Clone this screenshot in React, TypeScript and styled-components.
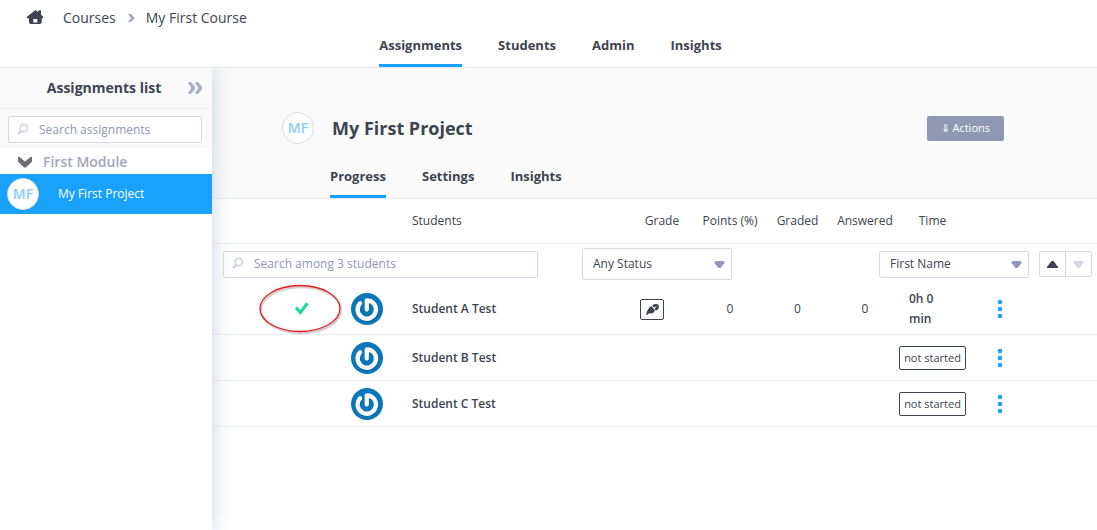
import React from "react";
import styled, { createGlobalStyle, css } from "styled-components";

const GlobalStyle = createGlobalStyle`
  *, *::before, *::after { box-sizing: border-box; }
  body {
    margin: 0;
    background: #fff;
    color: #3d444f;
    font-family: "Open Sans", "Noto Sans", sans-serif;
    font-size: 12px;
    line-height: 20px;
  }
  button, input, select { font: inherit; color: inherit; margin: 0; }
  a { color: inherit; text-decoration: none; }
  h1, h2, h3, ul, ol { margin: 0; padding: 0; }
  ul, ol { list-style: none; }
  svg { display: block; flex: none; }
`;

const Page = styled.div`
  min-height: 100vh;
  display: flex;
  flex-direction: column;
`;

const TopBar = styled.header`
  position: relative;
  z-index: 2;
  background: #fff;
  border-bottom: 1px solid #e8e9ee;
`;

const Breadcrumbs = styled.ol`
  display: flex;
  align-items: center;
  height: 35px;
  padding-left: 27px;
  font-size: 14px;
`;

const Crumb = styled.li`
  display: flex;
  align-items: center;
  &:nth-child(2) { margin-left: 20px; }
`;

const Separator = styled.svg`
  margin: 0 11px 0 12px;
`;

const Tabs = styled.ul<{ $centered?: boolean }>`
  display: flex;
  gap: 36px;
  font-size: 13px;
  font-weight: 700;
  ${(p) =>
    p.$centered
      ? css`justify-content: center; padding-left: 4px;`
      : css`padding-left: 118px;`}
`;

const Tab = styled.a<{ $active?: boolean }>`
  display: block;
  height: 32px;
  line-height: 20px;
  border-bottom: 3px solid ${(p) => (p.$active ? "#18a2fb" : "transparent")};
`;

const Body = styled.div`
  flex: 1;
  display: flex;
`;

const Sidebar = styled.aside`
  position: relative;
  z-index: 1;
  flex: none;
  width: 212px;
  background: #fff;
  box-shadow: 0 0 20px #c8cee2;
`;

const SidebarHead = styled.div`
  display: flex;
  align-items: center;
  justify-content: flex-end;
  height: 41px;
  padding-right: 10px;
  background: #fafafa;
  border-bottom: 1px solid #ededf3;
`;

const SidebarTitle = styled.h2`
  flex: 1;
  text-align: center;
  padding-left: 20px;
  font-size: 14px;
  font-weight: 700;
`;

const IconButton = styled.button`
  display: flex;
  align-items: center;
  justify-content: center;
  padding: 0;
  border: 0;
  background: none;
  cursor: pointer;
`;

const SidebarSearch = styled.div`
  padding: 7px 10px 5px 8px;
  background: #fafafa;
`;

const SearchField = styled.label`
  display: flex;
  align-items: center;
  gap: 10px;
  flex: 1;
  height: 27px;
  padding: 0 8px;
  background: #fff;
  border: 1px solid #d5d8e6;
  border-radius: 2px;
`;

const SearchInput = styled.input`
  flex: 1;
  min-width: 0;
  padding: 0;
  border: 0;
  outline: 0;
  background: none;
  font-size: 12px;
  &::placeholder { color: #8e98b3; opacity: 1; }
`;

const ModuleHead = styled.button`
  display: flex;
  align-items: center;
  gap: 11px;
  width: 100%;
  height: 26px;
  padding: 2px 0 0 18px;
  border: 0;
  background: #fff;
  color: #a1a6c0;
  font-size: 14px;
  font-weight: 600;
  cursor: pointer;
`;

const AssignmentLink = styled.a`
  display: flex;
  align-items: center;
  gap: 19px;
  height: 40px;
  padding-left: 7px;
  background: #18a2fb;
  color: #fff;
`;

const Initials = styled.span`
  display: flex;
  align-items: center;
  justify-content: center;
  flex: none;
  width: 32px;
  height: 32px;
  border: 1px solid #d9dcea;
  border-radius: 50%;
  background: #fff;
  color: #8accfd;
  font-size: 14px;
  font-weight: 600;
`;

const Main = styled.main`
  flex: 1;
  min-width: 0;
`;

const ProjectHead = styled.section`
  padding-top: 44px;
  background: #fafafa;
  border-bottom: 1px solid #e8e9f2;
`;

const ProjectTitleRow = styled.div`
  display: flex;
  align-items: center;
  gap: 18px;
  padding: 0 93px 0 70px;
  margin-bottom: 22px;
`;

const ProjectTitle = styled.h1`
  flex: 1;
  font-size: 18px;
  line-height: 24px;
  font-weight: 700;
`;

const ActionsButton = styled.button`
  height: 25px;
  padding: 0 14px;
  border: 0;
  border-radius: 2px;
  background: #8e98b3;
  color: #fff;
  font-size: 11px;
  cursor: pointer;
`;

const StudentTable = styled.table`
  width: 100%;
  table-layout: fixed;
  border-collapse: separate;
  border-spacing: 0;
`;

const Column = styled.col<{ $width?: number }>`
  ${(p) => p.$width && css`width: ${p.$width}px;`}
`;

const Row = styled.tr<{ $height: number; $plain?: boolean }>`
  height: ${(p) => p.$height}px;
  > * {
    padding: 0;
    border-bottom: ${(p) => (p.$plain ? "0" : "1px solid #ebecf4")};
  }
`;

const HeadCell = styled.th<{ $name?: boolean }>`
  font-weight: 400;
  white-space: nowrap;
  text-align: ${(p) => (p.$name ? "left" : "center")};
  && { padding-left: ${(p) => (p.$name ? 20 : 0)}px; }
`;

const Cell = styled.td`
  text-align: center;
`;

const StatusCell = styled(Cell)`
  && { padding-left: 48px; }
`;

const NameCell = styled.td`
  && { padding-left: 20px; }
  font-weight: 600;
`;

const GradeCell = styled(Cell)`
  && { padding-right: 20px; }
`;

const StatusMark = styled.div`
  position: relative;
  display: flex;
  align-items: center;
  justify-content: center;
`;

const Highlight = styled.svg`
  position: absolute;
  left: 50%;
  top: 50%;
  transform: translate(-50%, -50%);
`;

const GradeButton = styled(IconButton)`
  width: 24px;
  height: 21px;
  margin: 0 auto;
  border: 1px solid #3d444f;
  border-radius: 2px;
`;

const TimeSpent = styled.span`
  display: block;
  padding: 0 20px 0 10px;
  text-align: left;
  font-weight: 600;
`;

const NotStarted = styled.span`
  display: block;
  height: 24px;
  line-height: 22px;
  border: 1px solid #3d444f;
  border-radius: 2px;
  font-size: 11px;
  white-space: nowrap;
`;

const MenuButton = styled(IconButton)`
  width: 100%;
`;

const Filters = styled.div`
  display: flex;
  align-items: center;
  justify-content: space-between;
  height: 40px;
  padding: 0 5px 0 11px;
`;

const FilterGroup = styled.div<{ $gap: number; $grow?: boolean }>`
  display: flex;
  align-items: center;
  gap: ${(p) => p.$gap}px;
  ${(p) => p.$grow && css`flex: 1; max-width: 509px;`}
`;

const SelectBox = styled.label<{ $height: number }>`
  display: grid;
  align-items: center;
  flex: none;
  width: 150px;
  height: ${(p) => p.$height}px;
  border: 1px solid #d5d8e6;
  border-radius: 2px;
  background: #fff;
  > * { grid-area: 1 / 1; }
  svg { justify-self: end; margin-right: 6px; pointer-events: none; }
`;

const Select = styled.select`
  appearance: none;
  width: 100%;
  height: 100%;
  padding: 0 24px 0 10px;
  border: 0;
  outline: 0;
  background: none;
`;

const SortGroup = styled.div`
  display: flex;
  width: 53px;
  height: 26px;
  border: 1px solid #d5d8e6;
  border-radius: 2px;
`;

const SortButton = styled(IconButton)`
  flex: 1;
  & + & { border-left: 1px solid #d5d8e6; }
`;

const HomeIcon = () => (
  <svg width="16" height="16" viewBox="0 0 16 16" fill="#3d444f" aria-hidden="true">
    <path
      fillRule="evenodd"
      d="M8.500 0 11 2V.5h3v4.200l2 2v1.600h-1.300V12c0 1.200-.8 2-2 2H4c-1.200 0-2-.8-2-2V8.300H0V6.700zM6.300 9v3.500h4V9z"
    />
  </svg>
);

const ChevronRight = () => (
  <Separator width="7" height="8" viewBox="0 0 7 8" fill="#a3a9c6" aria-hidden="true">
    <path d="M0 0h3l4 4-4 4H0l3-4z" />
  </Separator>
);

const DoubleChevron = () => (
  <svg width="14" height="12" viewBox="0 0 14 12" fill="#a7afc9">
    <path d="M0 1 1.500 0H3l4 5v2l-4 5H1.500L0 11l3.500-5zM7 1 8.500 0H10l4 5v2l-4 5H8.500L7 11l3.500-5z" />
  </svg>
);

const ChevronDown = () => (
  <svg width="14" height="11" viewBox="0 0 14 11" fill="#6b6f73" aria-hidden="true">
    <path d="M0 0h1.500L7 4.500 12.500 0H14v4.500L8 10.500H6L0 4.500z" />
  </svg>
);

const SearchIcon = () => (
  <svg width="12" height="14" viewBox="0 0 12 14" fill="none" stroke="#d0d4e3" aria-hidden="true">
    <circle cx="6.800" cy="5" r="3.700" strokeWidth="1.700" />
    <path d="M4.200 7.800 1 11" strokeWidth="2.600" />
  </svg>
);

const Triangle = ({ color, up }: { color: string; up?: boolean }) => (
  <svg width="11" height="7" viewBox="0 0 11 7" fill={color} aria-hidden="true">
    {up ? <path d="M4.500 0h2L11 6v1H0V6z" /> : <path d="M1.500 0h8l1 1v1L6.500 7h-2L.5 2V1z" />}
  </svg>
);

const CheckIcon = () => (
  <svg width="15" height="14" viewBox="0 0 15 14" fill="none" stroke="#1fd8a4" role="img" aria-label="Completed">
    <path d="M2 5.500 6.300 10.500 13.500 1.300" strokeWidth="3.200" />
  </svg>
);

const FeatherIcon = () => (
  <svg width="13" height="11" viewBox="0 0 13 11" fill="#3d444f" aria-hidden="true">
    <path d="M.2 10.200C.8 6.500 3 3.300 5.500 2L9 6.500C8 8.700 6 9.700 3.200 9.300L1.200 11z" />
    <path d="M6.300 1.500C8.300-.2 11-.4 12.300.8c1.200 1.700.5 4.200-1.500 5.400l-1.100.3L8.600 5l2.200-2.800L8 3.500z" />
  </svg>
);

const DotsIcon = () => (
  <svg width="6" height="20" viewBox="0 0 6 20" fill="#18a2fb" aria-hidden="true">
    <circle cx="3" cy="3" r="2.300" />
    <circle cx="3" cy="10" r="2.300" />
    <circle cx="3" cy="17" r="2.300" />
  </svg>
);

const AvatarSvg = styled.svg`
  margin: 0 auto;
`;

const Gravatar = () => (
  <AvatarSvg width="32" height="32" viewBox="0 0 32 32" fill="none" strokeLinecap="round" strokeLinejoin="round" aria-hidden="true">
    <circle cx="16" cy="16" r="16" fill="#0a77bb" />
    <path d="M15.800 16.500V7.300a9.200 9.200 0 1 1-6.700 2.900" stroke="#06528a" strokeOpacity=".4" strokeWidth="4.800" transform="translate(.6 .8)" />
    <path d="M15.800 16.500V7.300a9.200 9.200 0 1 1-6.700 2.900" stroke="#fbfaf9" strokeWidth="4.300" />
  </AvatarSvg>
);

const CircledMark = () => (
  <Highlight width="86" height="52" viewBox="0 0 86 52" fill="none" aria-hidden="true">
    <ellipse cx="43" cy="27" rx="40" ry="23" stroke="#777" strokeOpacity=".35" strokeWidth="2.500" />
    <ellipse cx="42" cy="25.500" rx="40" ry="23" stroke="#ee1c1c" strokeWidth="1.300" />
  </Highlight>
);

const students = [
  { name: "Student A Test", height: 51, started: true },
  { name: "Student B Test", height: 46, started: false },
  { name: "Student C Test", height: 46, started: false },
];

const columnWidths = [130, 50, undefined, 68, 68, 67, 68, 67, 68, 63];

export default function App() {
  return (
    <Page>
      <GlobalStyle />
      <TopBar>
        <nav aria-label="Breadcrumb">
          <Breadcrumbs>
            <Crumb><a href="#home" aria-label="Home"><HomeIcon /></a></Crumb>
            <Crumb><a href="#courses">Courses</a></Crumb>
            <Crumb><ChevronRight /><a href="#course">My First Course</a></Crumb>
          </Breadcrumbs>
        </nav>
        <nav aria-label="Course">
          <Tabs $centered>
            <li><Tab href="#assignments" $active>Assignments</Tab></li>
            <li><Tab href="#students">Students</Tab></li>
            <li><Tab href="#admin">Admin</Tab></li>
            <li><Tab href="#insights">Insights</Tab></li>
          </Tabs>
        </nav>
      </TopBar>
      <Body>
        <Sidebar>
          <SidebarHead>
            <SidebarTitle>Assignments list</SidebarTitle>
            <IconButton type="button" aria-label="Toggle list"><DoubleChevron /></IconButton>
          </SidebarHead>
          <SidebarSearch>
            <SearchField>
              <SearchIcon />
              <SearchInput type="text" placeholder="Search assignments" aria-label="Search assignments" />
            </SearchField>
          </SidebarSearch>
          <ModuleHead type="button"><ChevronDown />First Module</ModuleHead>
          <AssignmentLink href="#project"><Initials>MF</Initials>My First Project</AssignmentLink>
        </Sidebar>
        <Main>
          <ProjectHead>
            <ProjectTitleRow>
              <Initials>MF</Initials>
              <ProjectTitle>My First Project</ProjectTitle>
              <ActionsButton type="button">⇓ Actions</ActionsButton>
            </ProjectTitleRow>
            <nav aria-label="Project">
              <Tabs>
                <li><Tab href="#progress" $active>Progress</Tab></li>
                <li><Tab href="#settings">Settings</Tab></li>
                <li><Tab href="#project-insights">Insights</Tab></li>
              </Tabs>
            </nav>
          </ProjectHead>
          <StudentTable>
            <colgroup>
              {columnWidths.map((width, i) => <Column key={i} $width={width} />)}
            </colgroup>
            <thead>
              <Row $height={45}>
                <td colSpan={2} />
                <HeadCell $name scope="col">Students</HeadCell>
                <HeadCell scope="col">Grade</HeadCell>
                <HeadCell scope="col">Points (%)</HeadCell>
                <HeadCell scope="col">Graded</HeadCell>
                <HeadCell scope="col">Answered</HeadCell>
                <HeadCell scope="col">Time</HeadCell>
                <td colSpan={2} />
              </Row>
            </thead>
            <tbody>
              <Row $height={40} $plain>
                <td colSpan={10}>
                  <Filters>
                    <FilterGroup $gap={44} $grow>
                      <SearchField>
                        <SearchIcon />
                        <SearchInput type="text" placeholder="Search among 3 students" aria-label="Search students" />
                      </SearchField>
                      <SelectBox $height={32}>
                        <Select aria-label="Status"><option>Any Status</option></Select>
                        <Triangle color="#8e98b8" />
                      </SelectBox>
                    </FilterGroup>
                    <FilterGroup $gap={10}>
                      <SelectBox $height={27}>
                        <Select aria-label="Sort by"><option>First Name</option></Select>
                        <Triangle color="#8e98b8" />
                      </SelectBox>
                      <SortGroup>
                        <SortButton type="button" aria-label="Ascending"><Triangle color="#3d444f" up /></SortButton>
                        <SortButton type="button" aria-label="Descending"><Triangle color="#d5d8e6" /></SortButton>
                      </SortGroup>
                    </FilterGroup>
                  </Filters>
                </td>
              </Row>
              {students.map((s) => (
                <Row key={s.name} $height={s.height}>
                  <StatusCell>
                    {s.started && <StatusMark><CheckIcon /><CircledMark /></StatusMark>}
                  </StatusCell>
                  <Cell><Gravatar /></Cell>
                  <NameCell>{s.name}</NameCell>
                  <GradeCell>
                    {s.started && <GradeButton type="button" aria-label="Grade"><FeatherIcon /></GradeButton>}
                  </GradeCell>
                  <Cell>{s.started && "0"}</Cell>
                  <Cell>{s.started && "0"}</Cell>
                  <Cell>{s.started && "0"}</Cell>
                  <Cell>
                    {s.started ? <TimeSpent>0h 0 min</TimeSpent> : <NotStarted>not started</NotStarted>}
                  </Cell>
                  <Cell><MenuButton type="button" aria-label="More"><DotsIcon /></MenuButton></Cell>
                  <td />
                </Row>
              ))}
            </tbody>
          </StudentTable>
        </Main>
      </Body>
    </Page>
  );
}
